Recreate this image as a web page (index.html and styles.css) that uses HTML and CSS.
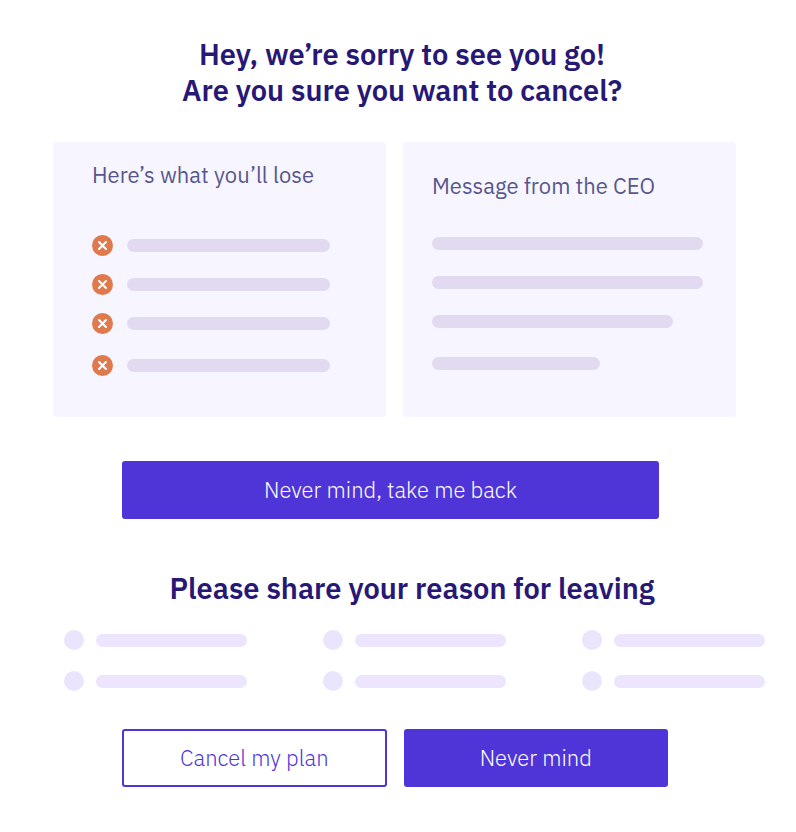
FILE: index.html
```html
<!DOCTYPE html>
<html lang="en">
<head>
    <meta charset="UTF-8">
    <meta name="viewport" content="width=device-width, initial-scale=1.0">
    <title>Cancel plan</title>
    <link rel="stylesheet" href="styles.css">
</head>
<body>
    <svg class="sprite" aria-hidden="true">
        <symbol id="cross" viewBox="0 0 20 20">
            <circle cx="10" cy="10" r="10" fill="#e0794b"/>
            <path d="M6.7 6.7l6.6 6.6M13.3 6.7l-6.6 6.6" stroke="#fff" stroke-width="2" stroke-linecap="round"/>
        </symbol>
    </svg>

    <main class="page">
        <h1 class="heading">Hey, we’re sorry to see you go!<br>Are you sure you want to cancel?</h1>

        <div class="cards">
            <section class="card">
                <h2 class="card-title">Here’s what you’ll lose</h2>
                <ul class="lines">
                    <li><svg class="icon"><use href="#cross"/></svg><span class="bar"></span></li>
                    <li><svg class="icon"><use href="#cross"/></svg><span class="bar"></span></li>
                    <li><svg class="icon"><use href="#cross"/></svg><span class="bar"></span></li>
                    <li><svg class="icon"><use href="#cross"/></svg><span class="bar"></span></li>
                </ul>
            </section>
            <section class="card card-message">
                <h2 class="card-title">Message from the CEO</h2>
                <ul class="lines">
                    <li><span class="bar"></span></li>
                    <li><span class="bar"></span></li>
                    <li><span class="bar bar-medium"></span></li>
                    <li><span class="bar bar-short"></span></li>
                </ul>
            </section>
        </div>

        <div class="actions actions-back">
            <button class="btn" type="button">Never mind, take me back</button>
        </div>

        <form class="survey">
            <h2 class="heading">Please share your reason for leaving</h2>
            <div class="reasons">
                <label class="reason"><input type="radio" name="reason" aria-label="Reason 1"><span class="bar"></span></label>
                <label class="reason"><input type="radio" name="reason" aria-label="Reason 2"><span class="bar"></span></label>
                <label class="reason"><input type="radio" name="reason" aria-label="Reason 3"><span class="bar"></span></label>
                <label class="reason"><input type="radio" name="reason" aria-label="Reason 4"><span class="bar"></span></label>
                <label class="reason"><input type="radio" name="reason" aria-label="Reason 5"><span class="bar"></span></label>
                <label class="reason"><input type="radio" name="reason" aria-label="Reason 6"><span class="bar"></span></label>
            </div>
            <div class="actions">
                <button class="btn btn-outline" type="submit">Cancel my plan</button>
                <button class="btn" type="button">Never mind</button>
            </div>
        </form>
    </main>
</body>
</html>
```
FILE: styles.css
```css
* {
    box-sizing: border-box;
}
body {
    margin: 0;
    background: #fff;
    font-family: "IBM Plex Sans", "Noto Sans", sans-serif;
}
.sprite {
    display: none;
}
.page {
    padding: 36px 0 44px;
}
.heading {
    margin: 0;
    padding-left: 8px;
    font-size: 29px;
    line-height: 36px;
    font-weight: 600;
    text-align: center;
    color: #281876;
}

/* cards */
.cards {
    display: grid;
    grid-template-columns: 1fr 1fr;
    gap: 17px;
    padding: 34px 60px 0 53px;
}
.card {
    background: #f7f5ff;
    border-radius: 4px;
    padding: 21px 56px 41px 39px;
}
.card-message {
    padding: 32px 33px 41px 29px;
}
.card-title {
    margin: 0;
    font-size: 22px;
    line-height: 24px;
    font-weight: 400;
    color: #57578c;
}
.lines {
    display: grid;
    gap: 18px;
    margin: 48px 0 0;
    padding: 0;
    list-style: none;
}
.card-message .lines {
    margin-top: 35px;
}
.lines li {
    display: flex;
    align-items: center;
    gap: 14px;
    height: 21px;
}
.lines li:last-child {
    margin-top: 3px;
}
.icon {
    width: 21px;
    height: 21px;
    flex: none;
}
.bar {
    flex: 1;
    height: 13px;
    border-radius: 7px;
    background: #e2daf1;
}
.bar-medium {
    flex: 0 0 89%;
}
.bar-short {
    flex: 0 0 62%;
}

/* buttons */
.actions {
    display: flex;
    gap: 17px;
    padding: 0 128px 0 122px;
}
.actions-back {
    padding: 44px 137px 0 122px;
}
.btn {
    flex: 1;
    height: 58px;
    padding: 0 0 2px;
    border: 2px solid #4f35d7;
    border-radius: 3px;
    background: #4f35d7;
    color: #fff;
    font-family: inherit;
    font-size: 22px;
    font-weight: 300;
    cursor: pointer;
}
.btn-outline {
    background: #fff;
    color: #4f35d7;
}

/* reasons */
.survey {
    padding-top: 51px;
}
.survey .heading {
    padding-left: 28px;
}
.reasons {
    display: grid;
    grid-template-columns: repeat(3, 1fr);
    gap: 21px 76px;
    padding: 24px 31px 38px 64px;
}
.reason {
    display: flex;
    align-items: center;
    gap: 12px;
}
.reason input {
    appearance: none;
    width: 20px;
    height: 20px;
    margin: 0;
    border-radius: 50%;
    background: #eae5fc;
}
.reason input:checked {
    background: #4f35d7;
}
.reason .bar {
    background: #ede4fd;
}
```
